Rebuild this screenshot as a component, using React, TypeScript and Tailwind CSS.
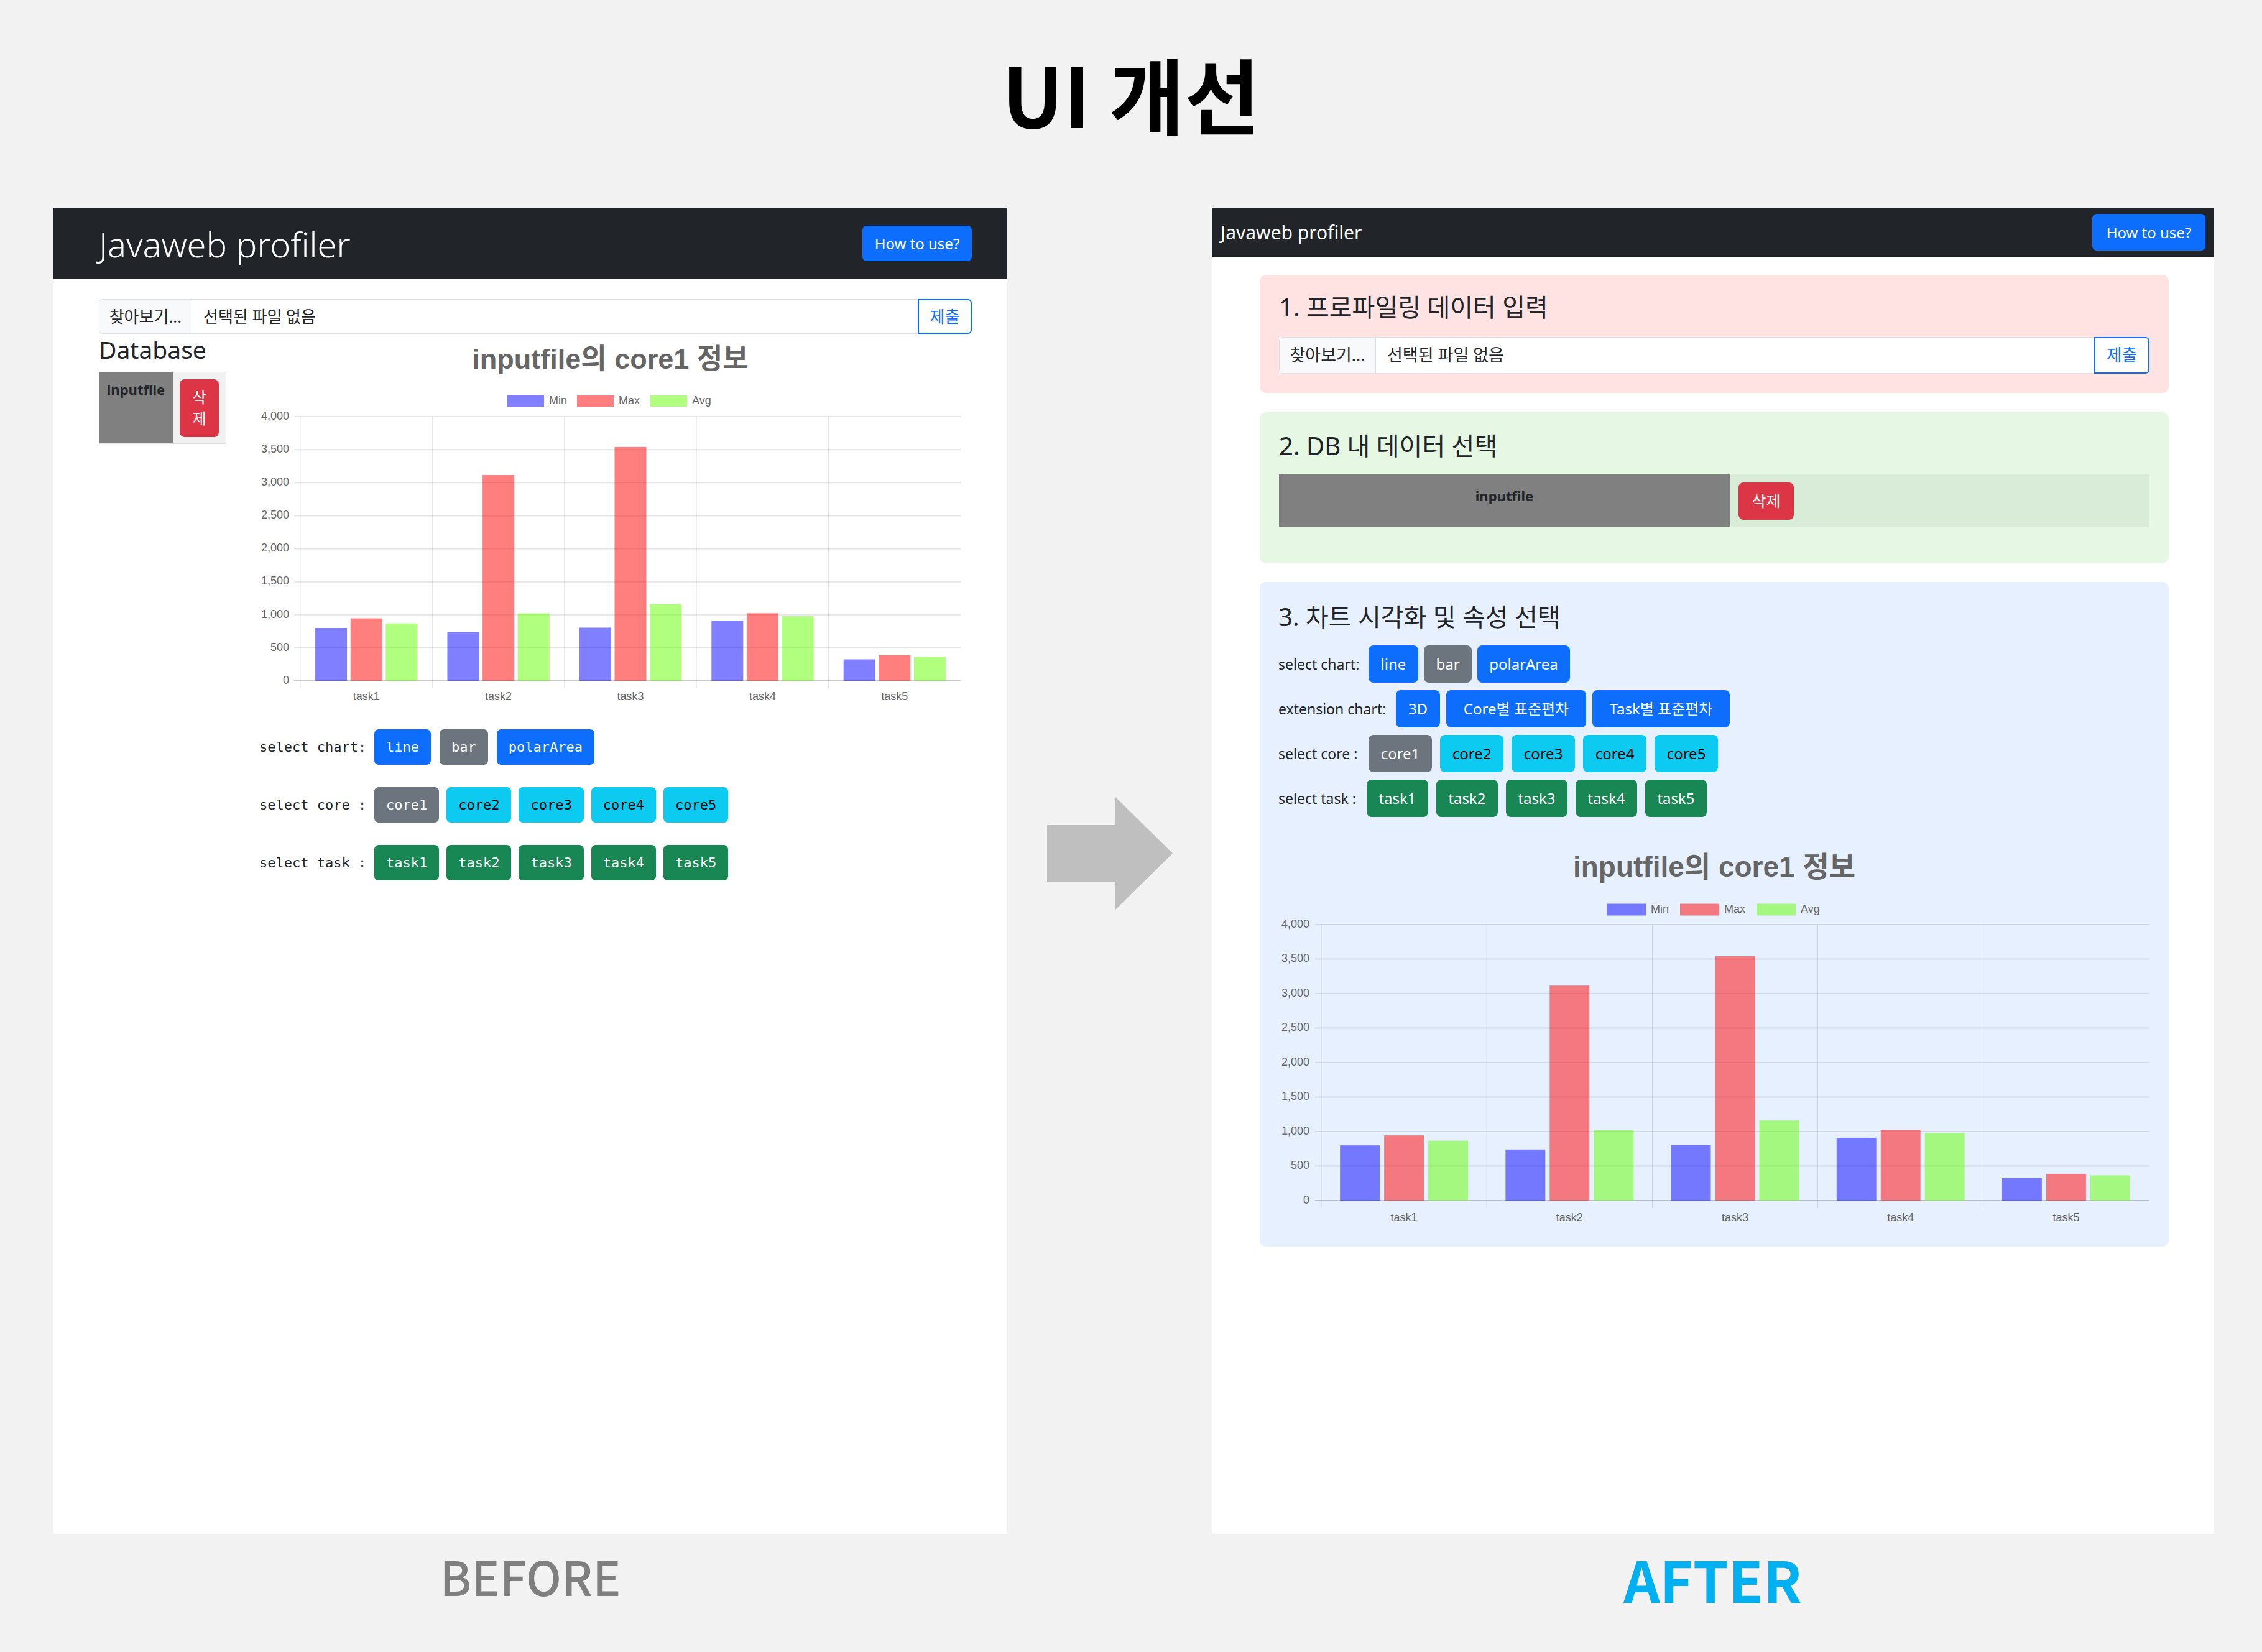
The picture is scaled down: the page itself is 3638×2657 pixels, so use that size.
import React from 'react';

const taskLabels = ['task1', 'task2', 'task3', 'task4', 'task5'];
const series = [
    { name: 'Min', color: 'rgba(0,0,255,0.5)', data: [800, 740, 805, 910, 325] },
    { name: 'Max', color: 'rgba(255,0,0,0.5)', data: [945, 3115, 3540, 1022, 388] },
    { name: 'Avg', color: 'rgba(100,255,0,0.5)', data: [868, 1020, 1160, 978, 365] },
];

type ChartProps = {
    w: number;
    h: number;
    l: number;
    t: number;
    r: number;
    b: number;
    legendX: number[];
    legendY: number;
    boxW: number;
    boxH: number;
    labelY: number;
    tickGap: number;
};

function BarChart({ w, h, l, t, r, b, legendX, legendY, boxW, boxH, labelY, tickGap }: ChartProps) {
    const max = 4000;
    const cw = (r - l) / 5;
    const slot = (cw * 0.8) / 3;
    const y = (v: number) => b - (v / max) * (b - t);
    const ticks = [0, 500, 1000, 1500, 2000, 2500, 3000, 3500, 4000];

    return (
        <svg width={w} height={h} className="block" fontFamily="'Liberation Sans', Arial, sans-serif">
            {series.map((s, k) => (
                <g key={s.name}>
                    <rect x={legendX[k]} y={legendY - boxH / 2} width={boxW} height={boxH} fill={s.color} />
                    <text x={legendX[k] + boxW + 8} y={legendY} dominantBaseline="middle" fontSize={18} fill="#666">
                        {s.name}
                    </text>
                </g>
            ))}

            {ticks.map((v) => (
                <g key={v}>
                    <line x1={l - 10} x2={r} y1={y(v)} y2={y(v)} stroke={v === 0 ? 'rgba(0,0,0,0.2)' : 'rgba(0,0,0,0.1)'} strokeWidth={2} />
                    <text x={l - tickGap} y={y(v)} dominantBaseline="middle" textAnchor="end" fontSize={18} fill="#666">
                        {v.toLocaleString('en-US')}
                    </text>
                </g>
            ))}

            {taskLabels.map((_, i) => (
                <line key={i} x1={l + i * cw} x2={l + i * cw} y1={t} y2={b + 12} stroke="rgba(0,0,0,0.1)" strokeWidth={1} />
            ))}

            {taskLabels.map((label, i) =>
                series.map((s, k) => {
                    const x = l + i * cw + cw * 0.1 + k * slot + slot * 0.05;
                    return <rect key={label + s.name} x={x} y={y(s.data[i])} width={slot * 0.9} height={b - y(s.data[i])} fill={s.color} />;
                })
            )}

            {taskLabels.map((label, i) => (
                <text key={label} x={l + i * cw + cw / 2} y={labelY} dominantBaseline="middle" textAnchor="middle" fontSize={18} fill="#666">
                    {label}
                </text>
            ))}
        </svg>
    );
}

const btnColors: Record<string, string> = {
    primary: 'bg-[#0d6efd] text-white',
    secondary: 'bg-[#6c757d] text-white',
    info: 'bg-[#0dcaf0] text-black',
    success: 'bg-[#198754] text-white',
    danger: 'bg-[#dc3545] text-white',
};

function Btn({ color, children, className = '' }: { color: string; children: React.ReactNode; className?: string }) {
    return <div className={`flex items-center justify-center whitespace-nowrap ${btnColors[color]} ${className}`}>{children}</div>;
}

function FileInput({ h, text, leftW, submitW }: { h: string; text: string; leftW: string; submitW: string }) {
    return (
        <div className={`flex ${h} ${text} bg-white`}>
            <div className={`${leftW} flex items-center justify-center bg-[#f8f9fa] border border-[#dee2e6] rounded-l-[6px]`}>찾아보기...</div>
            <div className="flex-1 flex items-center pl-[18px] border-y border-[#dee2e6]">선택된 파일 없음</div>
            <div className={`${submitW} flex items-center justify-center border-2 border-[#0d6efd] text-[#0d6efd] rounded-r-[6px]`}>제출</div>
        </div>
    );
}

function BeforePanel() {
    const monoRow = 'flex items-center h-[57px]';
    const monoBtn = 'h-[57px] px-[19px] rounded-[7px]';
    return (
        <div className="w-[1534px] h-[2133px] bg-white">
            <div className="h-[115px] bg-[#212529] flex items-center justify-between pl-[73px] pr-[57px]">
                <span className="text-[56px] font-light text-white">Javaweb profiler</span>
                <Btn color="primary" className="h-[57px] w-[176px] rounded-[7px] text-[24px]">How to use?</Btn>
            </div>

            <div className="pl-[73px] pr-[57px] pt-[32px]">
                <FileInput h="h-[56px]" text="text-[26px]" leftW="w-[150px]" submitW="w-[87px]" />

                <div className="flex">
                    <div className="w-[241px] pt-[2px]">
                        <h2 className="text-[39px] leading-[1.2]">Database</h2>
                        <div className="mt-[12px] flex h-[116px] w-[205px] border-b border-[#dee2e6]">
                            <div className="w-[119px] bg-[#808080] text-center font-bold text-[22px] pt-[12px]">inputfile</div>
                            <div className="flex-1 bg-[#f1f1f1] pl-[11px] pt-[12px]">
                                <div className="w-[63px] h-[93px] bg-[#dc3545] rounded-[8px] text-white text-[24px] leading-[1.45] flex flex-col items-center justify-center">
                                    <span>삭</span>
                                    <span>제</span>
                                </div>
                            </div>
                        </div>
                    </div>

                    <div className="flex-1 pt-[18px]">
                        <div className="text-center text-[45px] leading-none font-bold text-[#666] font-['Liberation_Sans','Noto_Sans_CJK_KR',sans-serif]">
                            inputfile의 core1 정보
                        </div>
                        <div className="mt-[25px]">
                            <BarChart w={1163} h={515} l={83} t={45} r={1145} b={470} legendX={[416, 528, 646]} legendY={20} boxW={59} boxH={18} labelY={496} tickGap={18} />
                        </div>

                        <div className="mt-[33px] pl-[17px] flex flex-col gap-[36px] font-['DejaVu_Sans_Mono',monospace] text-[22px]">
                            <div className={monoRow}>
                                <span className="w-[185px]">select chart:</span>
                                <div className="flex gap-[14px]">
                                    <Btn color="primary" className={monoBtn}>line</Btn>
                                    <Btn color="secondary" className={monoBtn}>bar</Btn>
                                    <Btn color="primary" className={monoBtn}>polarArea</Btn>
                                </div>
                            </div>
                            <div className={monoRow}>
                                <span className="w-[185px]">select core :</span>
                                <div className="flex gap-[12px]">
                                    <Btn color="secondary" className={monoBtn}>core1</Btn>
                                    <Btn color="info" className={monoBtn}>core2</Btn>
                                    <Btn color="info" className={monoBtn}>core3</Btn>
                                    <Btn color="info" className={monoBtn}>core4</Btn>
                                    <Btn color="info" className={monoBtn}>core5</Btn>
                                </div>
                            </div>
                            <div className={monoRow}>
                                <span className="w-[185px]">select task :</span>
                                <div className="flex gap-[12px]">
                                    <Btn color="success" className={monoBtn}>task1</Btn>
                                    <Btn color="success" className={monoBtn}>task2</Btn>
                                    <Btn color="success" className={monoBtn}>task3</Btn>
                                    <Btn color="success" className={monoBtn}>task4</Btn>
                                    <Btn color="success" className={monoBtn}>task5</Btn>
                                </div>
                            </div>
                        </div>
                    </div>
                </div>
            </div>
        </div>
    );
}

function AfterPanel() {
    const row = 'flex items-center h-[60px] text-[23px]';
    const btn = 'h-[60px] rounded-[8px] text-[24px]';
    return (
        <div className="w-[1611px] h-[2133px] bg-white">
            <div className="h-[79px] bg-[#212529] flex items-center justify-between pl-[14px] pr-[13px]">
                <span className="text-[30px] text-white">Javaweb profiler</span>
                <Btn color="primary" className="h-[59px] w-[182px] rounded-[7px] text-[24px]">How to use?</Btn>
            </div>

            <div className="pl-[77px] pr-[72px] pt-[29px]">
                {/* 1. input */}
                <section className="bg-[#ffe3e3] rounded-[10px] pt-[28px] px-[31px] pb-[31px]">
                    <h4 className="text-[40px] leading-[1.2]">1. 프로파일링 데이터 입력</h4>
                    <div className="mt-[24px]">
                        <FileInput h="h-[59px]" text="text-[27px]" leftW="w-[156px]" submitW="w-[89px]" />
                    </div>
                </section>

                {/* 2. DB */}
                <section className="mt-[31px] bg-[#e6f8e4] rounded-[10px] pt-[30px] px-[31px] pb-[58px]">
                    <h4 className="text-[40px] leading-[1.2]">2. DB 내 데이터 선택</h4>
                    <div className="mt-[22px] flex h-[85px] bg-[#d9ecd8] border-b border-[#d6dcd6]">
                        <div className="w-[725px] bg-[#808080] text-center font-bold text-[22px] pt-[18px]">inputfile</div>
                        <Btn color="danger" className="ml-[14px] mt-[13px] w-[89px] h-[60px] rounded-[8px] text-[25px]">삭제</Btn>
                    </div>
                </section>

                {/* 3. chart */}
                <section className="mt-[30px] bg-[#e7f0fe] rounded-[10px] pt-[32px] px-[30px] pb-[25px]">
                    <h4 className="text-[40px] leading-[1.2]">3. 차트 시각화 및 속성 선택</h4>
                    <div className="mt-[22px] flex flex-col gap-[12px]">
                        <div className={row}>
                            <span className="w-[145px]">select chart:</span>
                            <div className="flex gap-[9px]">
                                <Btn color="primary" className={`${btn} w-[80px]`}>line</Btn>
                                <Btn color="secondary" className={`${btn} w-[77px]`}>bar</Btn>
                                <Btn color="primary" className={`${btn} w-[149px]`}>polarArea</Btn>
                            </div>
                        </div>
                        <div className={row}>
                            <span className="w-[189px]">extension chart:</span>
                            <div className="flex gap-[10px]">
                                <Btn color="primary" className={`${btn} w-[71px]`}>3D</Btn>
                                <Btn color="primary" className={`${btn} w-[225px]`}>Core별 표준편차</Btn>
                                <Btn color="primary" className={`${btn} w-[221px]`}>Task별 표준편차</Btn>
                            </div>
                        </div>
                        <div className={row}>
                            <span className="w-[145px]">select core :</span>
                            <div className="flex gap-[13px]">
                                <Btn color="secondary" className={`${btn} w-[102px]`}>core1</Btn>
                                <Btn color="info" className={`${btn} w-[102px]`}>core2</Btn>
                                <Btn color="info" className={`${btn} w-[102px]`}>core3</Btn>
                                <Btn color="info" className={`${btn} w-[102px]`}>core4</Btn>
                                <Btn color="info" className={`${btn} w-[102px]`}>core5</Btn>
                            </div>
                        </div>
                        <div className={row}>
                            <span className="w-[142px]">select task :</span>
                            <div className="flex gap-[13px]">
                                <Btn color="success" className={`${btn} w-[99px]`}>task1</Btn>
                                <Btn color="success" className={`${btn} w-[99px]`}>task2</Btn>
                                <Btn color="success" className={`${btn} w-[99px]`}>task3</Btn>
                                <Btn color="success" className={`${btn} w-[99px]`}>task4</Btn>
                                <Btn color="success" className={`${btn} w-[99px]`}>task5</Btn>
                            </div>
                        </div>
                    </div>

                    <div className="mt-[57px] text-center text-[46px] leading-none font-bold text-[#666] font-['Liberation_Sans','Noto_Sans_CJK_KR',sans-serif]">
                        inputfile의 core1 정보
                    </div>
                    <div className="mt-[23px]">
                        <BarChart w={1400} h={540} l={69} t={47} r={1400} b={491} legendX={[528, 646, 769]} legendY={23} boxW={63} boxH={19} labelY={519} tickGap={19} />
                    </div>
                </section>
            </div>
        </div>
    );
}

export default function App() {
    return (
        <div className="w-[3638px] h-[2657px] bg-[#f2f2f2] text-[#212529] font-['Noto_Sans','Noto_Sans_CJK_KR',sans-serif]">
            <div className="h-[334px] pt-[83px] flex justify-center">
                <h1 className="text-[132px] leading-none font-bold text-black font-['Noto_Sans_CJK_KR',sans-serif]">UI 개선</h1>
            </div>

            <div className="flex pl-[86px]">
                <div className="w-[1534px] flex flex-col items-center">
                    <BeforePanel />
                    <div className="mt-[29px] text-[76px] leading-none font-medium text-[#7f7f7f] font-['Noto_Sans_CJK_KR',sans-serif]">BEFORE</div>
                </div>

                <div className="w-[329px] flex justify-center pt-[948px]">
                    <svg width="202" height="181" viewBox="0 0 202 181" className="block">
                        <polygon points="0,45 110,45 110,0 202,90.5 110,181 110,136 0,136" fill="#bfbfbf" />
                    </svg>
                </div>

                <div className="w-[1611px] flex flex-col items-center">
                    <AfterPanel />
                    <div className="mt-[26px] text-[91px] leading-none font-bold text-[#00b0f0] font-['Noto_Sans_CJK_KR',sans-serif]">AFTER</div>
                </div>
            </div>
        </div>
    );
}
